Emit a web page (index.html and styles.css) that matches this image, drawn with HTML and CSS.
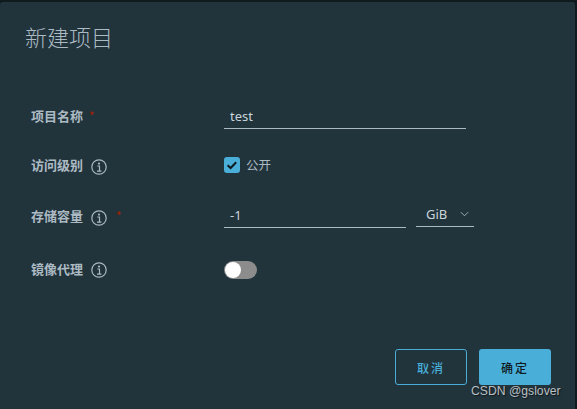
FILE: index.html
```html
<!DOCTYPE html>
<html>
<head>
  <meta charset="utf-8">
  <link rel="stylesheet" href="styles.css">
</head>
<body>
  <div class="modal">
    <h3 class="modal-title">新建项目</h3>

    <form class="project-form">
      <div class="form-row row-name">
        <div class="form-label"><span class="label-text">项目名称</span><span class="required">*</span></div>
        <div class="text-input wide">test</div>
      </div>

      <div class="form-row row-access">
        <div class="form-label">
          <span class="label-text">访问级别</span>
          <svg class="info-icon" viewBox="0 0 16 16"><circle cx="8" cy="8" r="7.2"/><circle class="dot" cx="8" cy="4.6" r="1.1"/><path d="M6.3 7h2.2v5M6 12.2h4.4"/></svg>
        </div>
        <label class="check">
          <span class="check-box">
            <svg viewBox="0 0 16 16"><path d="M3.6 8.2l3 2.8 5.6-5.8"/></svg>
          </span>
          <span class="check-text">公开</span>
        </label>
      </div>

      <div class="form-row row-quota">
        <div class="form-label">
          <span class="label-text">存储容量</span>
          <svg class="info-icon" viewBox="0 0 16 16"><circle cx="8" cy="8" r="7.2"/><circle class="dot" cx="8" cy="4.6" r="1.1"/><path d="M6.3 7h2.2v5M6 12.2h4.4"/></svg>
          <span class="required quota-star">*</span>
        </div>
        <div class="text-input short">-1</div>
        <div class="select-box">
          <span>GiB</span>
          <svg class="chevron" viewBox="0 0 10 6"><path d="M1 1l4 4 4-4"/></svg>
        </div>
      </div>

      <div class="form-row row-proxy">
        <div class="form-label">
          <span class="label-text">镜像代理</span>
          <svg class="info-icon" viewBox="0 0 16 16"><circle cx="8" cy="8" r="7.2"/><circle class="dot" cx="8" cy="4.6" r="1.1"/><path d="M6.3 7h2.2v5M6 12.2h4.4"/></svg>
        </div>
        <div class="toggle"><span class="knob"></span></div>
      </div>
    </form>

    <div class="modal-footer">
      <button class="btn btn-outline" type="button">取消</button>
      <button class="btn btn-primary" type="button">确定</button>
    </div>
  </div>
  <div class="watermark">CSDN @gslover</div>
</body>
</html>
```

FILE: styles.css
```css
html, body {
  height: 100%;
}

body {
  margin: 0;
  background: #0f1a1f;
  font-family: "Noto Sans", "Noto Sans CJK SC", sans-serif;
  overflow: hidden;
  position: relative;
}

.modal {
  width: 575px;
  height: 407px;
  margin-top: 2px;
  background: #21333b;
  border-radius: 3px 3px 0 0;
  box-sizing: border-box;
  padding: 20px 0 0 25px;
  display: flex;
  flex-direction: column;
}

.modal-title {
  margin: 0;
  font-size: 22px;
  line-height: 29px;
  font-weight: 300;
  color: #acbac3;
  font-family: "Noto Sans CJK SC", sans-serif;
}

.project-form {
  display: flex;
  flex-direction: column;
  margin-top: 48px;
}

.form-row {
  display: flex;
  align-items: center;
}

.row-name { height: 30px; }
.row-access { height: 24px; margin-top: 24px; }
.row-quota { height: 28px; margin-top: 23px; }
.row-proxy { height: 24px; margin-top: 30px; }

.form-label {
  width: 199px;
  flex: none;
  box-sizing: border-box;
  padding-left: 6px;
  display: flex;
  align-items: center;
  font-size: 13px;
  font-weight: 700;
  color: #acbac3;
  font-family: "Noto Sans CJK SC", sans-serif;
}

.row-name .form-label {
  padding-top: 3px;
}

.row-access .form-label {
  padding-bottom: 1px;
}

.row-quota .form-label {
  padding-top: 3px;
}

.row-proxy .form-label {
  padding-bottom: 4px;
}

.label-text {
  width: 53px;
}

.required {
  color: #a32100;
  font-size: 12px;
  font-weight: 400;
  margin-left: 5px;
  line-height: 1;
}

.quota-star {
  margin-left: 9px;
}

.info-icon {
  width: 16px;
  height: 16px;
  margin: 4px 0 0 7px;
  fill: none;
  stroke: #acbac3;
  stroke-width: 1.2;
}

.info-icon .dot {
  fill: #acbac3;
  stroke: none;
}

.text-input {
  box-sizing: border-box;
  height: 28px;
  padding: 5px 0 0 6px;
  border-bottom: 1px solid #acbac3;
  font-size: 13px;
  line-height: 20px;
  color: #c9d5dc;
}

.row-name .text-input {
  align-self: flex-end;
}

.wide { width: 242px; }
.short { width: 182px; }

.check {
  display: flex;
  align-items: center;
  margin-top: -1px;
}

.check-box {
  width: 16px;
  height: 16px;
  border-radius: 3px;
  background: #49afd9;
  display: flex;
}

.check-box svg {
  width: 16px;
  height: 16px;
  fill: none;
  stroke: #0f1a1f;
  stroke-width: 2;
}

.check-text {
  margin-left: 6px;
  font-size: 12.5px;
  font-family: "Noto Sans CJK SC", sans-serif;
  color: #acbac3;
}

.select-box {
  width: 58px;
  height: 26px;
  margin-left: 10px;
  box-sizing: border-box;
  padding: 1px 5px 0 10px;
  border-bottom: 1px solid #acbac3;
  display: flex;
  align-items: center;
  justify-content: space-between;
  font-size: 13px;
  color: #c9d5dc;
}

.chevron {
  width: 9px;
  height: 6px;
  fill: none;
  stroke: #acbac3;
  stroke-width: 1;
}

.toggle {
  width: 33px;
  height: 18px;
  border-radius: 9px;
  background: #8c8c8c;
  padding: 1px;
  box-sizing: border-box;
}

.knob {
  display: block;
  width: 16px;
  height: 16px;
  border-radius: 50%;
  background: #ffffff;
}

.modal-footer {
  display: flex;
  justify-content: flex-end;
  gap: 12px;
  padding-right: 24px;
  margin-top: 67px;
}

.btn {
  width: 72px;
  height: 36px;
  border-radius: 3px;
  font-size: 12px;
  letter-spacing: 2px;
  font-family: "Noto Sans CJK SC", sans-serif;
  font-weight: 500;
  box-sizing: border-box;
  padding: 0;
}

.btn-outline {
  background: transparent;
  border: 1px solid #49afd9;
  color: #49afd9;
}

.btn-primary {
  background: #49afd9;
  border: none;
  color: #0f1a1f;
}

.watermark {
  position: absolute;
  left: 471px;
  top: 384px;
  font-family: "Liberation Sans", sans-serif;
  font-size: 12.2px;
  line-height: 15px;
  color: #b9bfc2;
  text-shadow: 1px 1px 1px #111a1e;
}
```
